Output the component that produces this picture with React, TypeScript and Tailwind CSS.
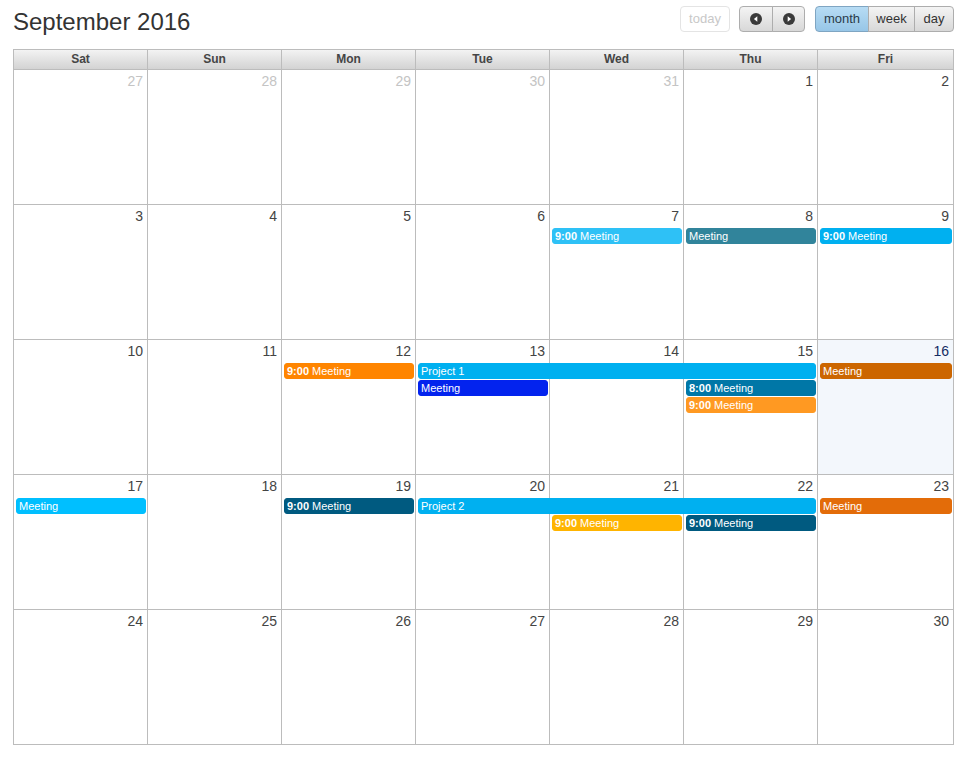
import React from 'react';

type Ev = { col: number; span?: number; row: number; time?: string; title: string; color: string };
type Week = { days: number[]; muted?: number[]; today?: number; events: Ev[] };

const dayNames = ['Sat', 'Sun', 'Mon', 'Tue', 'Wed', 'Thu', 'Fri'];

const weeks: Week[] = [
  { days: [27, 28, 29, 30, 31, 1, 2], muted: [0, 1, 2, 3, 4], events: [] },
  {
    days: [3, 4, 5, 6, 7, 8, 9],
    events: [
      { col: 4, row: 0, time: '9:00', title: 'Meeting', color: 'bg-[#2ec1f6] border-[#2ec1f6]' },
      { col: 5, row: 0, title: 'Meeting', color: 'bg-[#31849b] border-[#31849b]' },
      { col: 6, row: 0, time: '9:00', title: 'Meeting', color: 'bg-[#00b0f0] border-[#00b0f0]' },
    ],
  },
  {
    days: [10, 11, 12, 13, 14, 15, 16],
    today: 6,
    events: [
      { col: 2, row: 0, time: '9:00', title: 'Meeting', color: 'bg-[#ff8500] border-[#ff8500]' },
      { col: 3, span: 3, row: 0, title: 'Project 1', color: 'bg-[#00b0f0] border-[#00b0f0]' },
      { col: 3, row: 1, title: 'Meeting', color: 'bg-[#0323ee] border-[#0323ee]' },
      { col: 5, row: 1, time: '8:00', title: 'Meeting', color: 'bg-[#0077a7] border-[#0077a7]' },
      { col: 5, row: 2, time: '9:00', title: 'Meeting', color: 'bg-[#ff9922] border-[#ff9922]' },
      { col: 6, row: 0, title: 'Meeting', color: 'bg-[#cc6600] border-[#cc6600]' },
    ],
  },
  {
    days: [17, 18, 19, 20, 21, 22, 23],
    events: [
      { col: 0, row: 0, title: 'Meeting', color: 'bg-[#00bfff] border-[#00bfff]' },
      { col: 2, row: 0, time: '9:00', title: 'Meeting', color: 'bg-[#005a80] border-[#005a80]' },
      { col: 3, span: 3, row: 0, title: 'Project 2', color: 'bg-[#00b0f0] border-[#00b0f0]' },
      { col: 4, row: 1, time: '9:00', title: 'Meeting', color: 'bg-[#ffb400] border-[#ffb400]' },
      { col: 5, row: 1, time: '9:00', title: 'Meeting', color: 'bg-[#005a80] border-[#005a80]' },
      { col: 6, row: 0, title: 'Meeting', color: 'bg-[#e36c09] border-[#e36c09]' },
    ],
  },
  { days: [24, 25, 26, 27, 28, 29, 30], events: [] },
];

const colStart = ['col-start-1', 'col-start-2', 'col-start-3', 'col-start-4', 'col-start-5', 'col-start-6', 'col-start-7'];
const colSpan = ['', 'col-span-1', 'col-span-2', 'col-span-3'];
const rowStart = ['row-start-2', 'row-start-3', 'row-start-4'];

// six 134px columns, the last takes what is left (136px)
const cols = 'grid-cols-[134px_134px_134px_134px_134px_134px_1fr]';

function NavIcon({ dir }: { dir: 'prev' | 'next' }) {
  return (
    <svg width="12" height="12" viewBox="0 0 12 12">
      <circle cx="6" cy="6" r="6" fill="#3a3a3a" />
      {dir === 'prev' ? <polygon points="7.3,3.3 3.9,6 7.3,8.7" fill="#fff" /> : <polygon points="4.7,3.3 8.1,6 4.7,8.7" fill="#fff" />}
    </svg>
  );
}

const btn = 'flex h-[26px] items-center justify-center border border-[#adadad] bg-gradient-to-b from-[#f4f4f4] to-[#d8d8d8] text-[13px] text-[#333]';

function WeekRow({ week }: { week: Week }) {
  return (
    <div className={`grid h-[135px] ${cols} grid-rows-[23px_17px_17px_17px_1fr]`}>
      {week.days.map((d, i) => {
        const muted = week.muted?.includes(i);
        const isToday = week.today === i;
        return (
          <div
            key={i}
            className={`${colStart[i]} row-start-1 row-end-6 border-b border-r border-[#bcbcbc] ${isToday ? 'bg-[#f3f7fc]' : 'bg-white'} pr-[4px] pt-[2px] text-right text-[14px] leading-[18px] ${muted ? 'text-[#c4c4c4]' : isToday ? 'text-[#142c63]' : 'text-[#444]'}`}
          >
            {d}
          </div>
        );
      })}
      {week.events.map((e, i) => (
        <div
          key={i}
          className={`${colStart[e.col]} ${colSpan[e.span ?? 1]} ${rowStart[e.row]} z-10 mx-[2px] h-[16px] overflow-hidden whitespace-nowrap rounded-[3px] border pl-[2px] text-[11px] leading-[14px] text-white ${e.color}`}
        >
          {e.time && <span className="font-bold">{e.time} </span>}
          {e.title}
        </div>
      ))}
    </div>
  );
}

export default function App() {
  return (
    <div className="h-[758px] w-[967px] bg-white px-[13px] font-['Liberation_Sans',Arial,sans-serif]">
      <div className="flex h-[49px] items-start justify-between">
        <h2 className="mt-[8px] text-[24px] leading-[28px] text-[#333]">September 2016</h2>
        <div className="mt-[6px] flex items-center">
          <button className="flex h-[26px] w-[50px] items-center justify-center rounded-[4px] border border-[#e4e4e4] bg-white text-[13px] text-[#c8c8c8]">
            today
          </button>
          <div className="ml-[9px] flex">
            <button className={`${btn} w-[34px] rounded-l-[4px]`}>
              <NavIcon dir="prev" />
            </button>
            <button className={`${btn} -ml-px w-[33px] rounded-r-[4px]`}>
              <NavIcon dir="next" />
            </button>
          </div>
          <div className="ml-[10px] flex">
            <button className="flex h-[26px] w-[54px] items-center justify-center rounded-l-[4px] border border-[#7fa5c2] bg-gradient-to-b from-[#b7dcf4] to-[#97c6e7] text-[13px] text-[#2a3b4a]">
              month
            </button>
            <button className={`${btn} -ml-px w-[47px]`}>week</button>
            <button className={`${btn} -ml-px w-[40px] rounded-r-[4px]`}>day</button>
          </div>
        </div>
      </div>
      <div className="border-l border-t border-[#bcbcbc]">
        <div className={`grid h-[20px] ${cols}`}>
          {dayNames.map((n) => (
            <div
              key={n}
              className="border-b border-r border-[#bcbcbc] bg-gradient-to-b from-[#f3f3f3] to-[#d3d3d3] text-center text-[12px] font-bold leading-[19px] text-[#454545]"
            >
              {n}
            </div>
          ))}
        </div>
        {weeks.map((w, i) => (
          <WeekRow key={i} week={w} />
        ))}
      </div>
    </div>
  );
}
